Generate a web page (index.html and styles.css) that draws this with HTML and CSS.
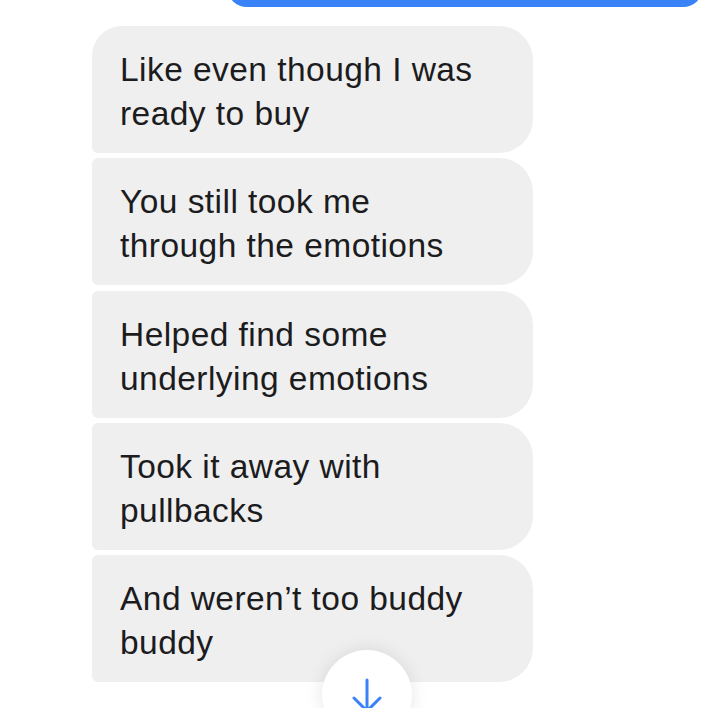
FILE: index.html
```html
<!DOCTYPE html>
<html lang="en">
<head>
<meta charset="utf-8">
<link rel="stylesheet" href="styles.css">
</head>
<body>
<div class="thread">
  <div class="bubble out"></div>
  <div class="bubble in first">Like even though I was<br>ready to buy</div>
  <div class="bubble in">You still took me<br>through the emotions</div>
  <div class="bubble in">Helped find some<br>underlying emotions</div>
  <div class="bubble in">Took it away with<br>pullbacks</div>
  <div class="bubble in">And weren’t too buddy<br>buddy</div>
</div>
<button class="scroll-down" aria-label="Scroll to bottom">
  <svg width="40" height="40" viewBox="0 0 40 40"><path d="M20 4 V34 M7 22 L20 35 L33 22" fill="none" stroke="#3a82f7" stroke-width="3" stroke-linecap="round" stroke-linejoin="round"/></svg>
</button>
</body>
</html>
```
FILE: styles.css
```css
html, body {
  margin: 0;
  padding: 0;
  background: #ffffff;
  width: 720px;
  height: 708px;
  overflow: hidden;
  position: relative;
}
.thread {
  display: flex;
  flex-direction: column;
  gap: 5.25px;
  padding-left: 92px;
  font-family: "Liberation Sans", Arial, sans-serif;
}
.bubble.out {
  align-self: flex-end;
  width: 476px;
  height: 40px;
  margin-top: -33px;
  margin-right: 17px;
  margin-bottom: 13.75px;
  background: #3a82f7;
  border-radius: 30px;
}
.bubble.in {
  width: 441px;
  box-sizing: border-box;
  height: 127px;
  padding: 22px 10px 17px 28px;
  background: #efefef;
  color: #1c1c1e;
  font-size: 33.5px;
  letter-spacing: 0.45px;
  line-height: 44px;
  white-space: nowrap;
  border-radius: 6px 34px 34px 6px;
}
.bubble.in.first {
  border-top-left-radius: 30px;
}
.scroll-down {
  position: absolute;
  left: 322px;
  top: 650px;
  width: 90px;
  height: 90px;
  border-radius: 50%;
  border: none;
  background: #ffffff;
  box-shadow: 0 0 18px rgba(0, 0, 0, 0.10);
  padding: 0;
  display: flex;
  justify-content: center;
  align-items: flex-start;
}
.scroll-down svg {
  margin-top: 26px;
}
```
